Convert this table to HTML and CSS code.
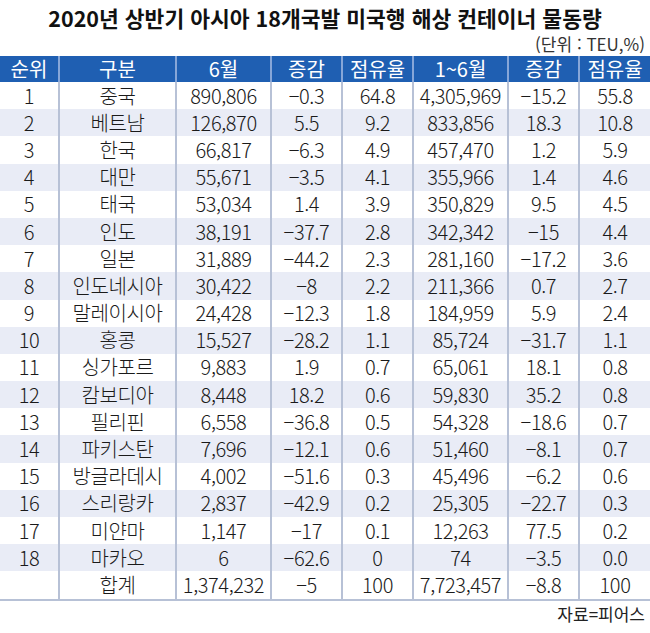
FILE: index.html
```html
<!DOCTYPE html>
<html lang="ko">
<head>
<meta charset="utf-8">
<link rel="stylesheet" href="styles.css">
</head>
<body>
<div class="page">
  <h1 class="title">2020년 상반기 아시아 18개국발 미국행 해상 컨테이너 물동량</h1>
  <div class="unit">(단위 : TEU,%)</div>
  <table class="grid">
    <colgroup>
      <col class="c1"><col class="c2"><col class="c3"><col class="c4"><col class="c5"><col class="c6"><col class="c7"><col class="c8">
    </colgroup>
    <thead>
      <tr><th>순위</th><th>구분</th><th>6월</th><th>증감</th><th>점유율</th><th>1~6월</th><th>증감</th><th>점유율</th></tr>
    </thead>
    <tbody>
      <tr><td>1</td><td>중국</td><td>890,806</td><td>−0.3</td><td>64.8</td><td>4,305,969</td><td>−15.2</td><td>55.8</td></tr>
      <tr><td>2</td><td>베트남</td><td>126,870</td><td>5.5</td><td>9.2</td><td>833,856</td><td>18.3</td><td>10.8</td></tr>
      <tr><td>3</td><td>한국</td><td>66,817</td><td>−6.3</td><td>4.9</td><td>457,470</td><td>1.2</td><td>5.9</td></tr>
      <tr><td>4</td><td>대만</td><td>55,671</td><td>−3.5</td><td>4.1</td><td>355,966</td><td>1.4</td><td>4.6</td></tr>
      <tr><td>5</td><td>태국</td><td>53,034</td><td>1.4</td><td>3.9</td><td>350,829</td><td>9.5</td><td>4.5</td></tr>
      <tr><td>6</td><td>인도</td><td>38,191</td><td>−37.7</td><td>2.8</td><td>342,342</td><td>−15</td><td>4.4</td></tr>
      <tr><td>7</td><td>일본</td><td>31,889</td><td>−44.2</td><td>2.3</td><td>281,160</td><td>−17.2</td><td>3.6</td></tr>
      <tr><td>8</td><td>인도네시아</td><td>30,422</td><td>−8</td><td>2.2</td><td>211,366</td><td>0.7</td><td>2.7</td></tr>
      <tr><td>9</td><td>말레이시아</td><td>24,428</td><td>−12.3</td><td>1.8</td><td>184,959</td><td>5.9</td><td>2.4</td></tr>
      <tr><td>10</td><td>홍콩</td><td>15,527</td><td>−28.2</td><td>1.1</td><td>85,724</td><td>−31.7</td><td>1.1</td></tr>
      <tr><td>11</td><td>싱가포르</td><td>9,883</td><td>1.9</td><td>0.7</td><td>65,061</td><td>18.1</td><td>0.8</td></tr>
      <tr><td>12</td><td>캄보디아</td><td>8,448</td><td>18.2</td><td>0.6</td><td>59,830</td><td>35.2</td><td>0.8</td></tr>
      <tr><td>13</td><td>필리핀</td><td>6,558</td><td>−36.8</td><td>0.5</td><td>54,328</td><td>−18.6</td><td>0.7</td></tr>
      <tr><td>14</td><td>파키스탄</td><td>7,696</td><td>−12.1</td><td>0.6</td><td>51,460</td><td>−8.1</td><td>0.7</td></tr>
      <tr><td>15</td><td>방글라데시</td><td>4,002</td><td>−51.6</td><td>0.3</td><td>45,496</td><td>−6.2</td><td>0.6</td></tr>
      <tr><td>16</td><td>스리랑카</td><td>2,837</td><td>−42.9</td><td>0.2</td><td>25,305</td><td>−22.7</td><td>0.3</td></tr>
      <tr><td>17</td><td>미얀마</td><td>1,147</td><td>−17</td><td>0.1</td><td>12,263</td><td>77.5</td><td>0.2</td></tr>
      <tr><td>18</td><td>마카오</td><td>6</td><td>−62.6</td><td>0</td><td>74</td><td>−3.5</td><td>0.0</td></tr>
      <tr><td></td><td>합계</td><td>1,374,232</td><td>−5</td><td>100</td><td>7,723,457</td><td>−8.8</td><td>100</td></tr>
    </tbody>
  </table>
  <div class="source">자료=피어스</div>
</div>
</body>
</html>
```

FILE: styles.css
```css
html, body {
  margin: 0;
  padding: 0;
  background: #ffffff;
}
.page {
  width: 650px;
  height: 633px;
  font-family: "Noto Sans CJK KR", "Noto Sans", sans-serif;
  color: #1a1a1a;
  overflow: hidden;
}
.title {
  margin: 0;
  padding-top: 4px;
  height: 28px;
  font-size: 21.5px;
  font-weight: 700;
  line-height: 28px;
  text-align: center;
  letter-spacing: 0;
  color: #111;
}
.unit {
  height: 24px;
  font-size: 17px;
  line-height: 24px;
  text-align: right;
  padding-right: 5px;
  color: #333;
}
.grid {
  width: 650px;
  border-collapse: collapse;
  table-layout: fixed;
}
.c1 { width: 59px; }
.c2 { width: 117px; }
.c3 { width: 95px; }
.c4 { width: 71px; }
.c5 { width: 71px; }
.c6 { width: 95px; }
.c7 { width: 71px; }
.c8 { width: 71px; }
.grid th {
  background: #1f5fb2;
  color: #ffffff;
  font-weight: 400;
  font-size: 20px;
  height: 26px;
  padding: 0;
  line-height: 26px;
  border-left: 2px solid #86a6d8;
  text-align: center;
}
.grid td {
  font-size: 20px;
  font-weight: 300;
  height: 27.2px;
  padding: 0;
  line-height: 26px;
  text-align: center;
  border-left: 2px solid #b7c1d6;
  white-space: nowrap;
  letter-spacing: -0.4px;
}
.grid th:first-child, .grid td:first-child {
  border-left: none;
}
.grid tbody tr:nth-child(even) td {
  background: #e9ecf6;
}
.grid tbody tr:last-child td {
  border-bottom: 2px solid #b7c1d6;
}
.source {
  font-size: 17px;
  line-height: 26px;
  text-align: right;
  padding-right: 5px;
  color: #222;
}
```
